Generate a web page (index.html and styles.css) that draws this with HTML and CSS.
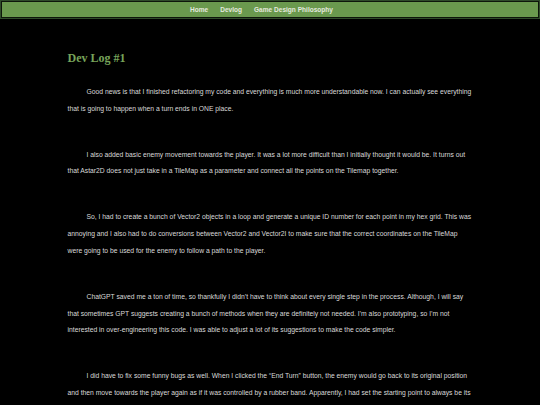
FILE: index.html
```html
<!DOCTYPE html>
<html lang="en">
<head>
<meta charset="utf-8">
<title>Dev Log #1</title>
<link rel="stylesheet" href="styles.css">
</head>
<body>
<header class="site-header">
  <nav class="nav">
    <ul class="nav-list">
      <li><a class="nav-link" href="#">Home</a></li>
      <li><a class="nav-link" href="#">Devlog</a></li>
      <li><a class="nav-link" href="#">Game Design Philosophy</a></li>
    </ul>
  </nav>
</header>
<main class="content">
  <h1 class="title">Dev Log #1</h1>
  <p class="para">Good news is that I finished refactoring my code and everything is much more understandable now. I can actually see everything that is going to happen when a turn ends in ONE place.</p>
  <p class="para">I also added basic enemy movement towards the player. It was a lot more difficult than I initially thought it would be. It turns out that Astar2D does not just take in a TileMap as a parameter and connect all the points on the Tilemap together.</p>
  <p class="para">So, I had to create a bunch of Vector2 objects in a loop and generate a unique ID number for each point in my hex grid. This was annoying and I also had to do conversions between Vector2 and Vector2I to make sure that the correct coordinates on the TileMap were going to be used for the enemy to follow a path to the player.</p>
  <p class="para">ChatGPT saved me a ton of time, so thankfully I didn’t have to think about every single step in the process. Although, I will say that sometimes GPT suggests creating a bunch of methods when they are definitely not needed. I’m also prototyping, so I’m not interested in over-engineering this code. I was able to adjust a lot of its suggestions to make the code simpler.</p>
  <p class="para">I did have to fix some funny bugs as well. When I clicked the “End Turn” button, the enemy would go back to its original position and then move towards the player again as if it was controlled by a rubber band. Apparently, I had set the starting point to always be its original position instead of its current position.</p>
</main>
</body>
</html>
```
FILE: styles.css
```css
html, body {
  margin: 0;
  padding: 0;
  background: #000;
}

body {
  font-family: "Liberation Sans", Arial, sans-serif;
  color: #d9d9d9;
}

.site-header {
  border: 1px solid #2f4a2a;
}

.nav {
  background: #6a994e;
  border: 1px solid #0e160b;
}

.nav-list {
  list-style: none;
  margin: 0;
  padding: 0 17px 0 0;
  height: 15px;
  display: flex;
  justify-content: center;
  align-items: center;
  gap: 12px;
}

.nav-link {
  color: #e4e9df;
  text-decoration: none;
  font-weight: bold;
  font-size: 6.55px;
  line-height: 15px;
  display: block;
}

.content {
  width: 75%;
  margin: 0 auto;
}

.title {
  font-family: "Liberation Serif", "Times New Roman", serif;
  font-weight: bold;
  font-size: 12px;
  line-height: 16px;
  color: #76a35a;
  margin: 31px 0 18px;
}

.para {
  font-size: 6.77px;
  line-height: 16.7px;
  text-indent: 19px;
  margin: 0 0 29.3px;
}
```
